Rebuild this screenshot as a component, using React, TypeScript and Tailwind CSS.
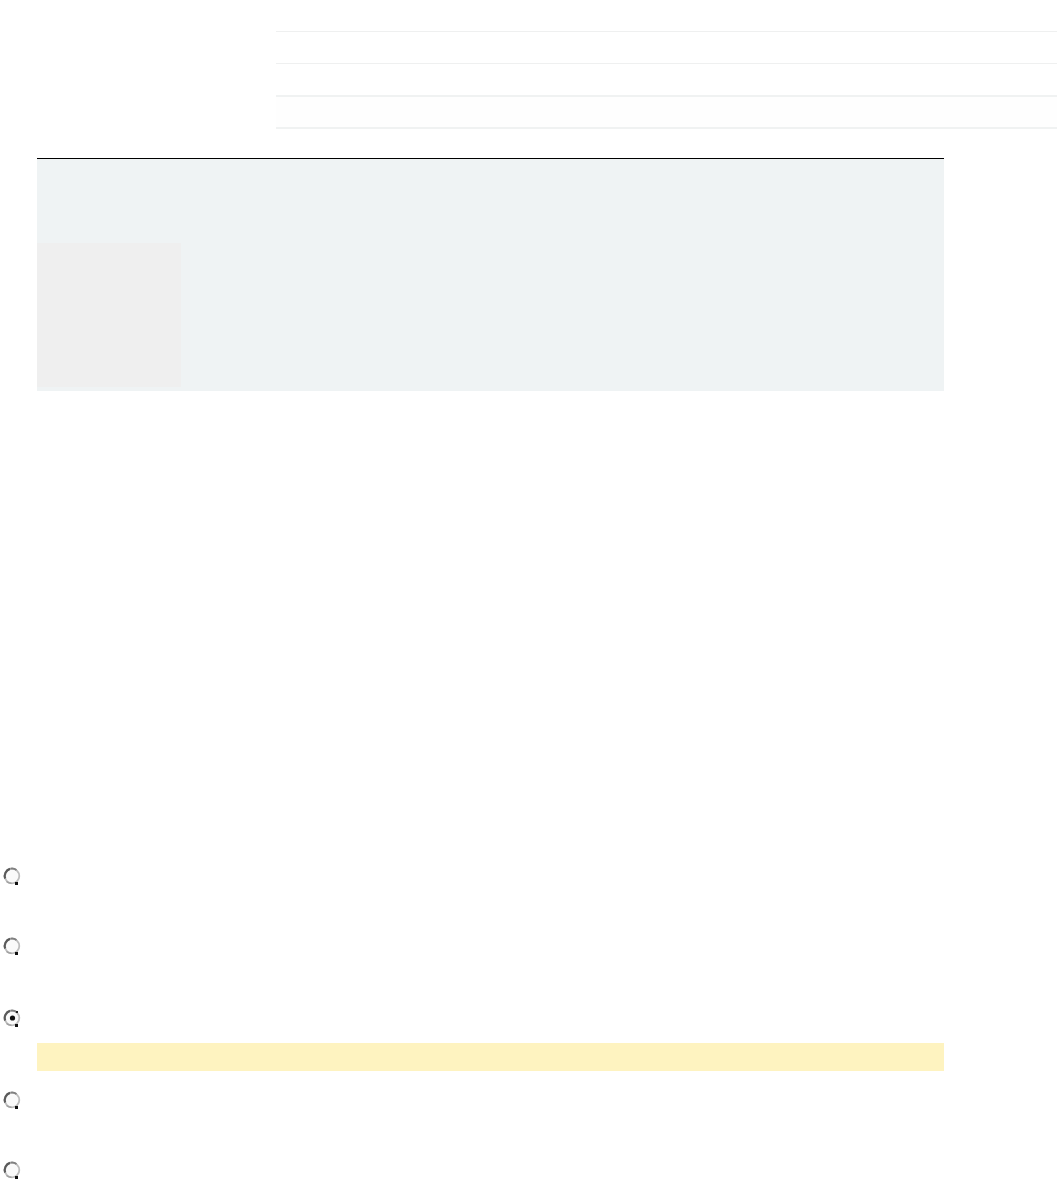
import React from "react";

function Radio({ checked }: { checked?: boolean }) {
  return (
    <svg width="20" height="20" viewBox="0 0 20 20" className="block">
      <circle cx="10" cy="10" r="7.3" fill="#fafafa" stroke="#bdbdbd" strokeWidth="1.8" />
      <path d="M3.2 12.5 A7.3 7.3 0 0 1 8 2.9" fill="none" stroke="#5a5a5a" strokeWidth="2.2" />
      <path d="M8.5 2.7 A7.3 7.3 0 0 1 14.5 4" fill="none" stroke="#808080" strokeWidth="1.8" />
      <path d="M4.5 15.5 A7.3 7.3 0 0 0 9.5 17.3" fill="none" stroke="#a0a0a0" strokeWidth="1.6" />
      {checked && <circle cx="10.5" cy="10" r="2.6" fill="#111" />}
      {checked && <rect x="14" y="3" width="2" height="2" fill="#222" />}
      <rect x="13" y="16" width="3" height="3" fill="#111" />
    </svg>
  );
}

export default function App() {
  return (
    <div className="w-[1057px] min-h-[1193px] bg-white relative" style={{ fontFamily: "'Liberation Sans', Arial, sans-serif" }}>
      <div className="pl-[276px] pt-[31px]">
        <div className="h-px bg-[#eff0f0]" />
        <div className="h-[31px]" />
        <div className="h-px bg-[#eff0f0]" />
        <div className="h-[31px]" />
        <div className="h-[2px] bg-[#f0f2f2]" />
        <div className="h-[30px] bg-[#fefefe]" />
        <div className="h-[2px] bg-[#f0f2f2]" />
      </div>
      <div className="ml-[37px] w-[907px] mt-[29px] border-t border-black bg-[#eff3f4] pt-[84px] pb-[4px]">
        <div className="w-[144px] h-[144px] bg-[#efefef]" />
      </div>
      <div className="mt-[475px] flex flex-col">
        <div className="pl-[2px] h-[20px]"><Radio /></div>
        <div className="h-[50px]" />
        <div className="pl-[2px] h-[20px]"><Radio /></div>
        <div className="h-[52px]" />
        <div className="pl-[2px] h-[20px]"><Radio checked /></div>
        <div className="h-[15px]" />
        <div className="ml-[37px] w-[907px] h-[28px] bg-[#fef3c0]" />
        <div className="h-[19px]" />
        <div className="pl-[2px] h-[20px]"><Radio /></div>
        <div className="h-[50px]" />
        <div className="pl-[2px] h-[20px]"><Radio /></div>
      </div>
    </div>
  );
}
